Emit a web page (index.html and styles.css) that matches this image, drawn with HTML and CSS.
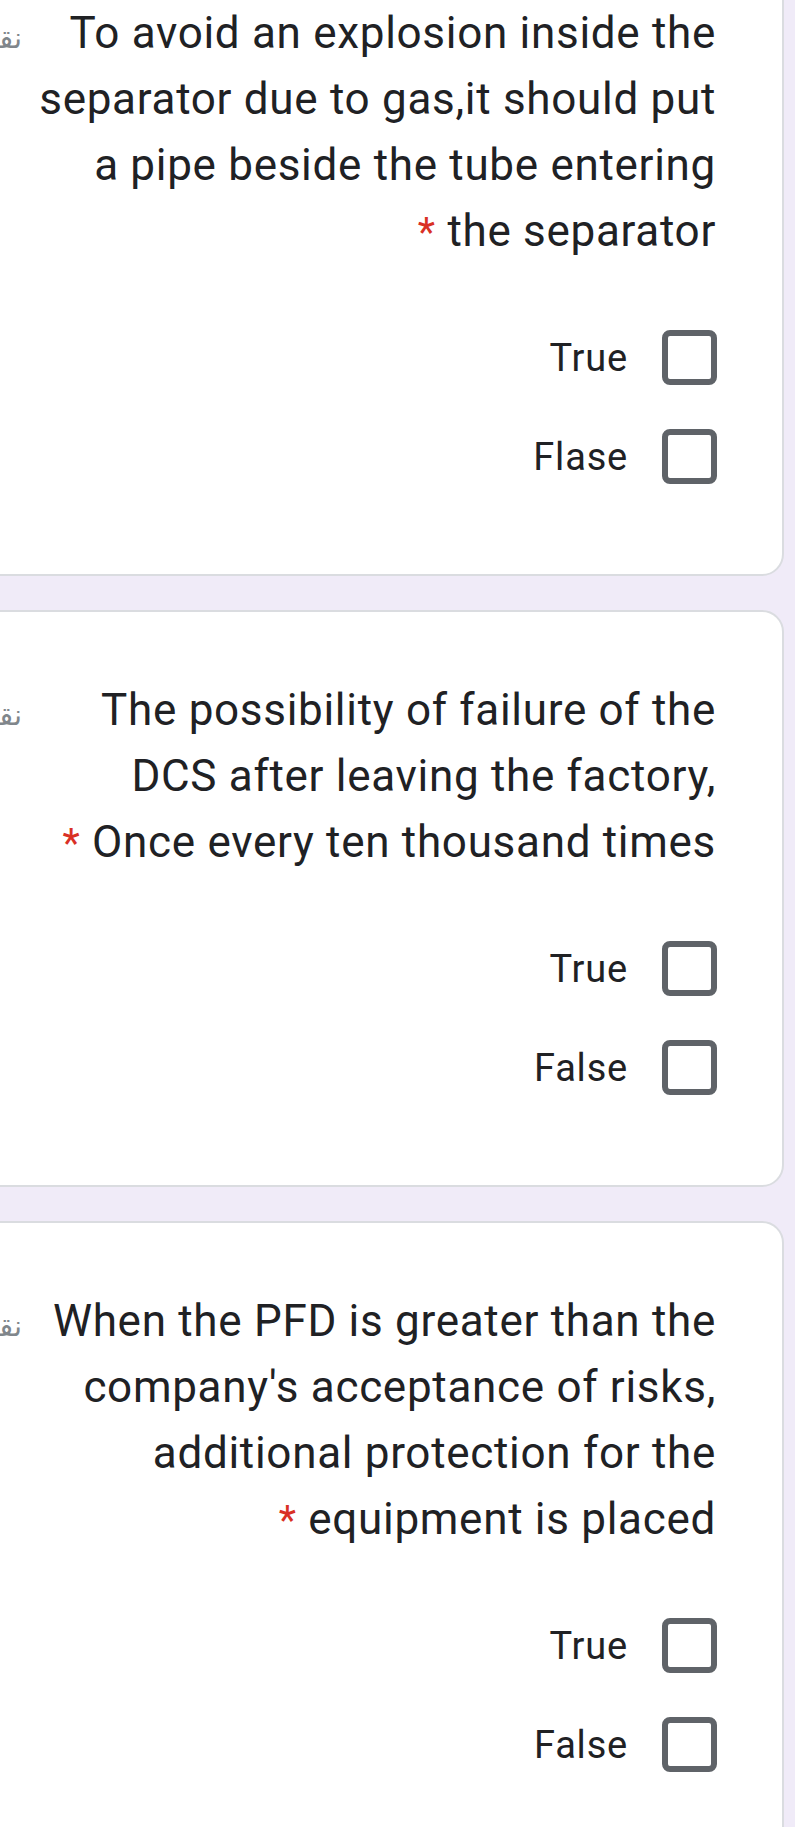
FILE: index.html
```html
<!DOCTYPE html>
<html lang="en">
<head>
<meta charset="utf-8">
<title>Form</title>
<link rel="stylesheet" href="styles.css">
</head>
<body>
<main class="form">
  <section class="card">
    <div class="header">
      <span class="points" dir="rtl">نقطة واحدة</span>
      <h2 class="title">To avoid an explosion inside the<br>separator due to gas,it should put<br>a pipe beside the tube entering<br><span class="req">*</span> the separator</h2>
    </div>
    <div class="options">
      <label class="option"><span class="label">True</span><span class="box"></span></label>
      <label class="option"><span class="label">Flase</span><span class="box"></span></label>
    </div>
  </section>
  <section class="card">
    <div class="header">
      <span class="points" dir="rtl">نقطة واحدة</span>
      <h2 class="title">The possibility of failure of the<br>DCS after leaving the factory,<br><span class="req">*</span> Once every ten thousand times</h2>
    </div>
    <div class="options">
      <label class="option"><span class="label">True</span><span class="box"></span></label>
      <label class="option"><span class="label">False</span><span class="box"></span></label>
    </div>
  </section>
  <section class="card">
    <div class="header">
      <span class="points" dir="rtl">نقطة واحدة</span>
      <h2 class="title">When the PFD is greater than the<br>company's acceptance of risks,<br>additional protection for the<br><span class="req">*</span> equipment is placed</h2>
    </div>
    <div class="options">
      <label class="option"><span class="label">True</span><span class="box"></span></label>
      <label class="option"><span class="label">False</span><span class="box"></span></label>
    </div>
  </section>
</main>
</body>
</html>
```

FILE: styles.css
```css
html, body {
  margin: 0;
  padding: 0;
  background: #f0ebf8;
  overflow: hidden;
}
body {
  font-family: "Roboto", "DejaVu Sans", sans-serif;
  color: #202124;
}
.form {
  display: flex;
  flex-direction: column;
  gap: 34px;
  margin: -67px 11px 0 -120px;
}
.card {
  background: #fff;
  border: 2px solid #dadce0;
  border-radius: 22px;
  padding: 65px 66px 68px 66px;
}
.header {
  display: flex;
  align-items: baseline;
}
.points {
  flex: 0 0 74px;
  min-width: 0;
  white-space: nowrap;
  text-align: right;
  font-family: "DejaVu Sans", sans-serif;
  font-size: 29px;
  color: #80868b;
}
.title {
  flex: 1;
  min-width: 0;
  margin: 0;
  text-align: right;
  font-size: 44px;
  font-weight: 400;
  line-height: 66px;
  letter-spacing: 0.7px;
  color: #202124;
  white-space: nowrap;
}
.req {
  color: #d93025;
  font-size: 40px;
}
.options {
  margin-top: 42px;
  display: flex;
  flex-direction: column;
}
.option {
  height: 99px;
  display: flex;
  justify-content: flex-end;
  align-items: center;
  gap: 34px;
}
.label {
  font-size: 38px;
  letter-spacing: 0.8px;
  color: #202124;
}
.box {
  width: 55px;
  height: 55px;
  box-sizing: border-box;
  border: 6px solid #5f6368;
  border-radius: 8px;
  margin-right: -1px;
}
```
